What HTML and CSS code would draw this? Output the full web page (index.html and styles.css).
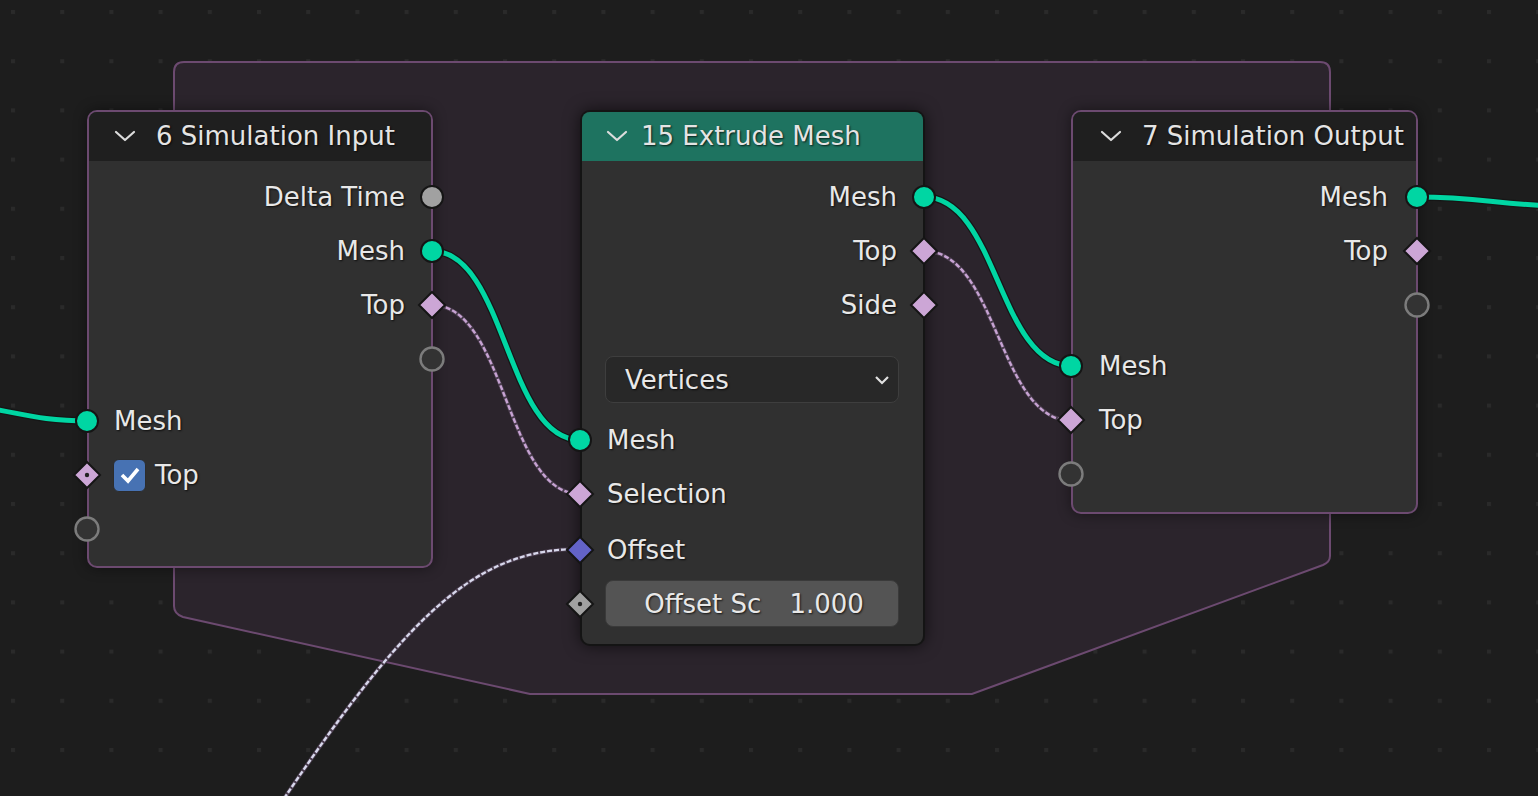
FILE: index.html
```html
<!DOCTYPE html>
<html>
<head>
<meta charset="utf-8">
<link rel="stylesheet" href="styles.css">
</head>
<body>
<div class="canvas">
  <svg class="backdrop" width="1538" height="796" viewBox="0 0 1538 796">
    <defs>
      <pattern id="grid" x="11" y="10" width="49.2" height="49.2" patternUnits="userSpaceOnUse">
        <rect x="0" y="0" width="4" height="4" fill="#2a2a2a"/>
      </pattern>
    </defs>
    <rect width="1538" height="796" fill="#1d1d1d"/>
    <rect width="1538" height="796" fill="url(#grid)"/>
    <path class="zone" d="M174,72 Q174,62 184,62 L1320,62 Q1330,62 1330,72 L1330,556 Q1330,562 1323,565 L972,694 L530,694 L183,617 Q174,614 174,606 Z"/>
    <g class="links">
      <path class="l-out" d="M-60,405 C10,405 20,421 88,421"/>
      <path class="l-teal" d="M-60,405 C10,405 20,421 88,421"/>
      <path class="l-out" d="M432,251 C506,251 506,440 580,440"/>
      <path class="l-teal" d="M432,251 C506,251 506,440 580,440"/>
      <path class="l-out" d="M924,197 C998,197 998,366 1072,366"/>
      <path class="l-teal" d="M924,197 C998,197 998,366 1072,366"/>
      <path class="l-out" d="M1417,197 C1480,197 1500,205 1560,206"/>
      <path class="l-teal" d="M1417,197 C1480,197 1500,205 1560,206"/>
      <path class="d-out" d="M432,305 C506,305 506,494 580,494"/>
      <path class="d-lilac" d="M432,305 C506,305 506,494 580,494"/>
      <path class="d-out" d="M924,251 C998,251 998,421 1072,421"/>
      <path class="d-lilac" d="M924,251 C998,251 998,421 1072,421"/>
      <path class="d-out" d="M580,549 C470,549 400,620 250,850"/>
      <path class="d-white" d="M580,549 C470,549 400,620 250,850"/>
    </g>
  </svg>

  <!-- Node 6 Simulation Input -->
  <div class="node node-sim node-in">
    <div class="header">
      <svg class="chev" width="22" height="14" viewBox="0 0 22 14"><polyline points="2,3 11,11 20,3"/></svg>
      <span>6 Simulation Input</span>
    </div>
    <div class="body">
      <div class="row out">Delta Time<svg class="sock" viewBox="0 0 28 28"><circle cx="14" cy="14" r="11" class="s-gray"/></svg></div>
      <div class="row out">Mesh<svg class="sock" viewBox="0 0 28 28"><circle cx="14" cy="14" r="11" class="s-teal"/></svg></div>
      <div class="row out">Top<svg class="sock" viewBox="0 0 28 28"><path d="M14 1 L27 14 L14 27 L1 14Z" class="s-lilac"/></svg></div>
      <div class="row out"><svg class="sock" viewBox="0 0 28 28"><circle cx="14" cy="14" r="11.5" class="s-empty"/></svg></div>
      <div class="spacer8"></div>
      <div class="row in"><svg class="sock" viewBox="0 0 28 28"><circle cx="14" cy="14" r="11" class="s-teal"/></svg>Mesh</div>
      <div class="row in"><svg class="sock" viewBox="0 0 28 28"><path d="M14 1 L27 14 L14 27 L1 14Z" class="s-lilac"/><circle cx="14" cy="14" r="2.2" fill="#222"/></svg><span class="check"><svg width="22" height="18" viewBox="0 0 22 18"><polyline points="3,9 9,15 19,3"/></svg></span>Top</div>
      <div class="row in"><svg class="sock" viewBox="0 0 28 28"><circle cx="14" cy="14" r="11.5" class="s-empty"/></svg></div>
    </div>
  </div>

  <!-- Node 15 Extrude Mesh -->
  <div class="node node-extrude">
    <div class="header teal">
      <svg class="chev" width="22" height="14" viewBox="0 0 22 14"><polyline points="2,3 11,11 20,3"/></svg>
      <span>15 Extrude Mesh</span>
    </div>
    <div class="body">
      <div class="row out">Mesh<svg class="sock" viewBox="0 0 28 28"><circle cx="14" cy="14" r="11" class="s-teal"/></svg></div>
      <div class="row out">Top<svg class="sock" viewBox="0 0 28 28"><path d="M14 1 L27 14 L14 27 L1 14Z" class="s-lilac"/></svg></div>
      <div class="row out">Side<svg class="sock" viewBox="0 0 28 28"><path d="M14 1 L27 14 L14 27 L1 14Z" class="s-lilac"/></svg></div>
      <div class="dropdown"><span>Vertices</span><svg width="16" height="10" viewBox="0 0 16 10"><polyline points="2,2 8,8 14,2"/></svg></div>
      <div class="row in"><svg class="sock" viewBox="0 0 28 28"><circle cx="14" cy="14" r="11" class="s-teal"/></svg>Mesh</div>
      <div class="row in"><svg class="sock" viewBox="0 0 28 28"><path d="M14 1 L27 14 L14 27 L1 14Z" class="s-lilac"/></svg>Selection</div>
      <div class="row in row-offset"><svg class="sock" viewBox="0 0 28 28"><path d="M14 1 L27 14 L14 27 L1 14Z" class="s-blue"/></svg>Offset</div>
      <div class="fieldrow"><svg class="sock" viewBox="0 0 28 28"><path d="M14 1 L27 14 L14 27 L1 14Z" class="s-graydia"/><circle cx="14" cy="14" r="2.2" fill="#222"/></svg><div class="field"><span>Offset Sc</span><span>1.000</span></div></div>
    </div>
  </div>

  <!-- Node 7 Simulation Output -->
  <div class="node node-sim node-outnode">
    <div class="header">
      <svg class="chev" width="22" height="14" viewBox="0 0 22 14"><polyline points="2,3 11,11 20,3"/></svg>
      <span>7 Simulation Output</span>
    </div>
    <div class="body">
      <div class="row out">Mesh<svg class="sock" viewBox="0 0 28 28"><circle cx="14" cy="14" r="11" class="s-teal"/></svg></div>
      <div class="row out">Top<svg class="sock" viewBox="0 0 28 28"><path d="M14 1 L27 14 L14 27 L1 14Z" class="s-lilac"/></svg></div>
      <div class="row out"><svg class="sock" viewBox="0 0 28 28"><circle cx="14" cy="14" r="11.5" class="s-empty"/></svg></div>
      <div class="spacer7"></div>
      <div class="row in"><svg class="sock" viewBox="0 0 28 28"><circle cx="14" cy="14" r="11" class="s-teal"/></svg>Mesh</div>
      <div class="row in"><svg class="sock" viewBox="0 0 28 28"><path d="M14 1 L27 14 L14 27 L1 14Z" class="s-lilac"/></svg>Top</div>
      <div class="row in"><svg class="sock" viewBox="0 0 28 28"><circle cx="14" cy="14" r="11.5" class="s-empty"/></svg></div>
    </div>
  </div>
</div>
</body>
</html>
```

FILE: styles.css
```css
* { box-sizing: border-box; }
html, body {
  margin: 0;
  padding: 0;
  background: #1d1d1d;
  overflow: hidden;
}
.canvas {
  position: relative;
  width: 1538px;
  height: 796px;
  overflow: hidden;
  font-family: "DejaVu Sans", "Noto Sans", sans-serif;
  font-size: 26px;
  color: #e8e8e8;
}
.backdrop {
  position: absolute;
  left: 0;
  top: 0;
  display: block;
}
.zone {
  fill: #2b242c;
  stroke: #6c4a70;
  stroke-width: 2;
}
.links path { fill: none; }
.l-out { stroke: #161616; stroke-width: 7.5; }
.l-teal { stroke: #00d6a3; stroke-width: 5; }
.d-out { stroke: #4a3d4e; stroke-width: 4; }
.d-lilac { stroke: #c7a3d3; stroke-width: 2.4; stroke-dasharray: 5 2; }
.d-white { stroke: #d8d8ec; stroke-width: 2.4; stroke-dasharray: 5 2; }

.node {
  position: absolute;
  top: 110px;
  display: flex;
  flex-direction: column;
  background: #303030;
  border: 2px solid #6c4a70;
  border-radius: 10px;
  box-shadow: 0 0 14px rgba(0, 0, 0, 0.45);
  text-shadow: 1px 1px 2px rgba(0, 0, 0, 0.75);
}
.node-in { left: 87px; width: 346px; height: 458px; }
.node-extrude {
  left: 580px; width: 345px; height: 536px;
  border-color: #141414;
  box-shadow: 0 0 16px rgba(0, 0, 0, 0.6);
}
.node-outnode { left: 1071px; width: 347px; height: 404px; }

.header {
  height: 49px;
  flex: none;
  display: flex;
  align-items: center;
  gap: 20px;
  padding-left: 25px;
  background: #1f1f1f;
  border-radius: 8px 8px 0 0;
  color: #e4e4e4;
  white-space: nowrap;
  padding-bottom: 2px;
}
.header.teal { background: #1e7360; padding-left: 24px; gap: 13px; }
.node-outnode .header { padding-left: 27px; gap: 20px; }
.chev polyline {
  fill: none;
  stroke: #dcdcdc;
  stroke-width: 2.2;
  stroke-linecap: round;
  stroke-linejoin: round;
}
.body {
  display: flex;
  flex-direction: column;
  padding-top: 9px;
}
.row {
  position: relative;
  height: 54px;
  flex: none;
  display: flex;
  align-items: center;
  white-space: nowrap;
}
.row.out { justify-content: flex-end; padding-right: 26px; }
.row.in { justify-content: flex-start; padding-left: 25px; }
.row-offset { margin-top: 2px; height: 53px; }
.node-outnode .row.out { padding-right: 28px; }
.node-outnode .row.in { padding-left: 26px; }
.spacer8 { height: 8px; flex: none; }
.spacer7 { height: 7px; flex: none; }

.sock {
  position: absolute;
  width: 28px;
  height: 28px;
  top: 50%;
  margin-top: -14px;
  overflow: visible;
}
.row.out .sock { right: -15px; }
.row.in .sock, .fieldrow .sock { left: -16px; }
.s-teal { fill: #00d6a3; stroke: #151515; stroke-width: 2; }
.s-gray { fill: #a1a1a1; stroke: #151515; stroke-width: 2; }
.s-lilac { fill: #cca6d6; stroke: #151515; stroke-width: 2; stroke-linejoin: miter; }
.s-blue { fill: #6363c7; stroke: #151515; stroke-width: 2; }
.s-graydia { fill: #a1a1a1; stroke: #151515; stroke-width: 2; }
.s-empty { fill: #333333; stroke: #7c7c7c; stroke-width: 2.4; }

.check {
  width: 33px;
  height: 33px;
  margin-right: 9px;
  margin-left: -1px;
  background: #4772b3;
  border: 1px solid #2c2c2c;
  border-radius: 6px;
  display: flex;
  align-items: center;
  justify-content: center;
}
.check polyline {
  fill: none;
  stroke: #ffffff;
  stroke-width: 3.6;
}

.dropdown {
  margin: 24px 24px 10px 23px;
  height: 47px;
  flex: none;
  background: #282828;
  border: 1px solid #3e3e3e;
  border-radius: 8px;
  display: flex;
  align-items: center;
  justify-content: space-between;
  padding: 0 8px 0 19px;
}
.dropdown polyline {
  fill: none;
  stroke: #e0e0e0;
  stroke-width: 2.2;
}
.fieldrow {
  position: relative;
  margin-top: 4px;
  height: 47px;
  flex: none;
  padding: 0 24px 0 23px;
}
.field {
  height: 47px;
  background: #545454;
  border: 1px solid #3a3a3a;
  border-radius: 8px;
  display: flex;
  align-items: center;
  justify-content: center;
  gap: 28px;
  padding-left: 4px;
}
```
